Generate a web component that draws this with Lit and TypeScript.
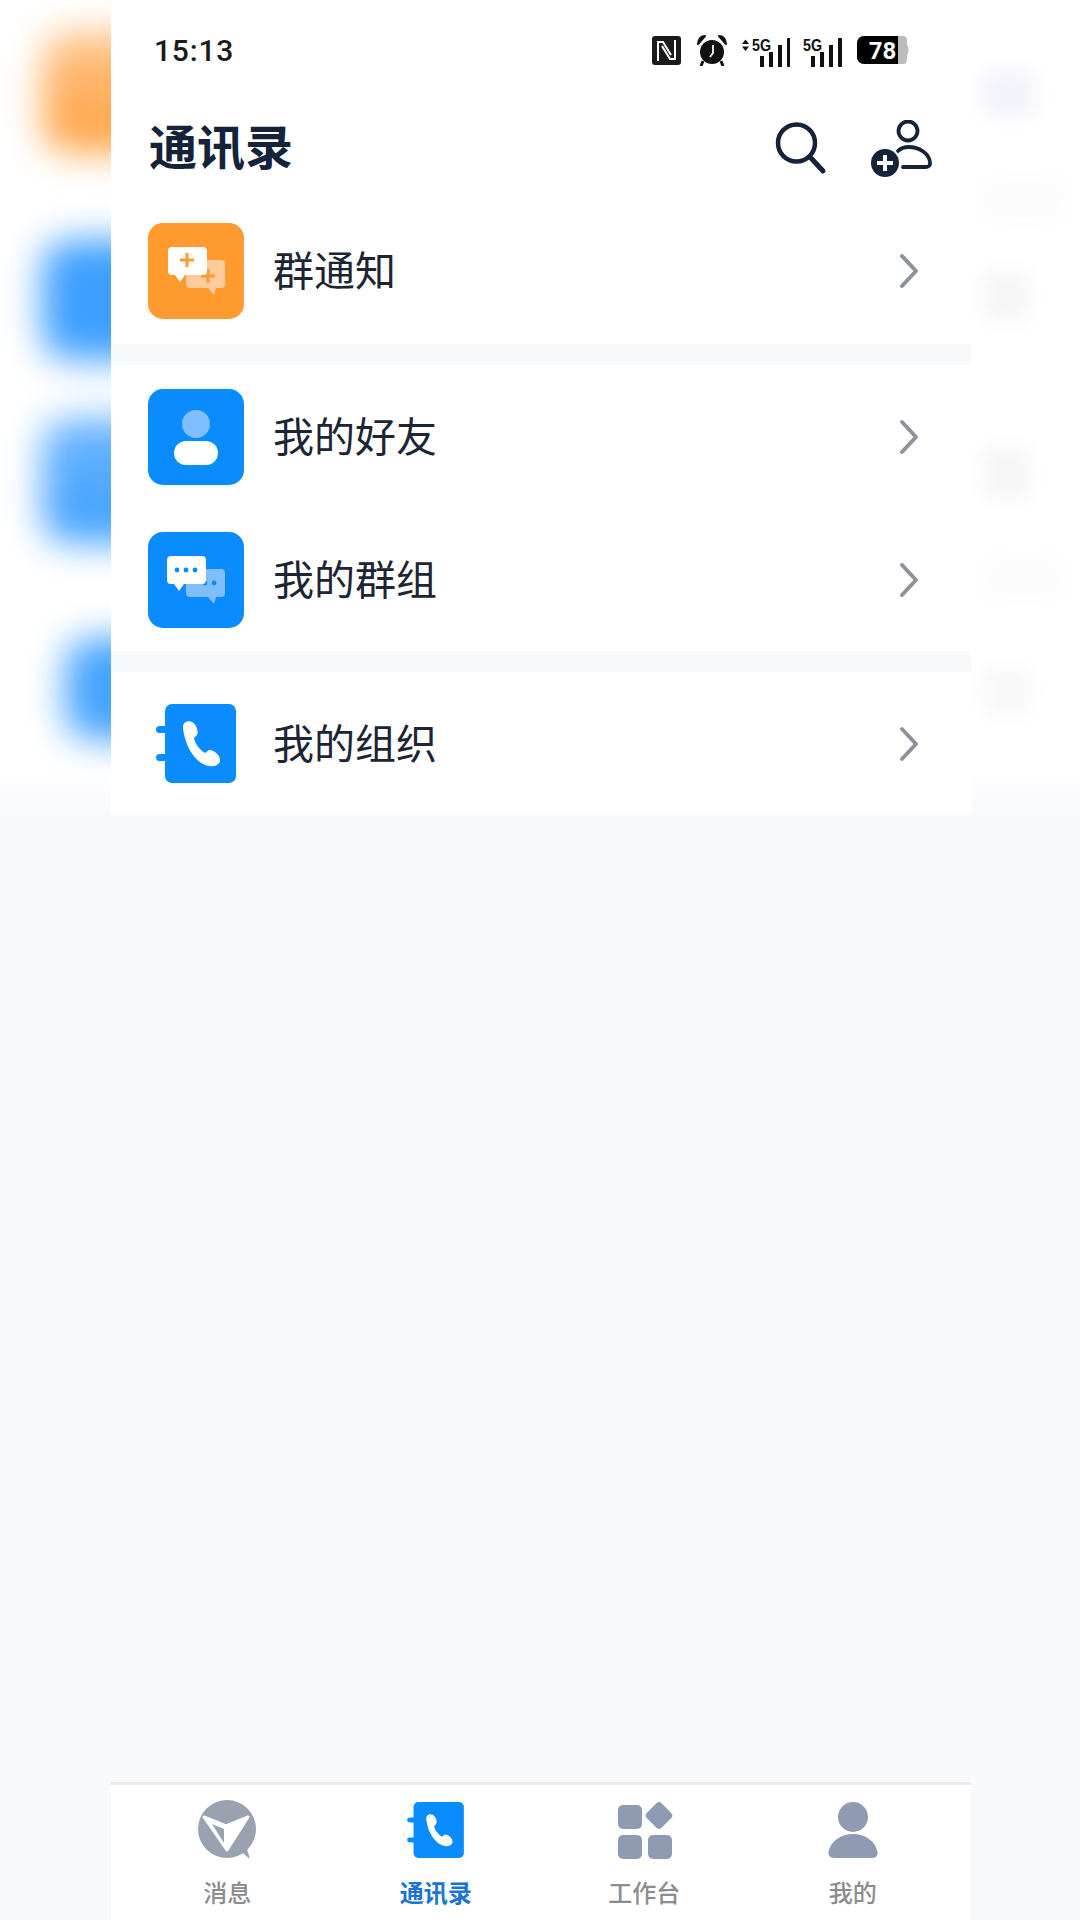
import { LitElement, html, svg, css } from 'lit';
import { customElement } from 'lit/decorators.js';

const INK = '#14233a';
const BLUE = '#0a8cff';

const bookIcon = (w: number, h: number) => html`
  <svg width=${w} height=${h} viewBox="0 0 80 79">
    <rect x="0" y="22" width="14" height="7" rx="3.5" fill=${BLUE}></rect>
    <rect x="0" y="50" width="14" height="7" rx="3.5" fill=${BLUE}></rect>
    <rect x="9" y="0" width="71" height="79" rx="7" fill=${BLUE}></rect>
    <path d="M27 23C27 18 32 16 36 18C40 20 43 27 41 31L38 34C39 40 44 46 49 49L53 46C58 46 64 51 64 56C64 61 58 63 53 62C39 60 28 40 27 23Z" fill="#fff"></path>
  </svg>`;

// tail sits left on the front bubble and right on the back one
const bubble = (x: number, y: number, fill: string, tailRight = false) => svg`
  <path
    d="M${x + 4} ${y}H${x + 35}a4 4 0 0 1 4 4V${y + 24}a4 4 0 0 1 -4 4H${tailRight ? x + 30 : x + 17}l-${tailRight ? 2 : 5} 7l-${tailRight ? 6 : 5} -7H${x + 4}a4 4 0 0 1 -4 -4V${y + 4}a4 4 0 0 1 4 -4Z"
    fill=${fill}></path>`;

const noticeIcon = html`
  <svg width="96" height="96" viewBox="0 0 96 96">
    <rect width="96" height="96" rx="15" fill="#ff9a2e"></rect>
    ${bubble(38, 37, '#ffcb9c', true)}
    <path d="M60 46v14M53 53h14" stroke="#ff9a2e" stroke-width="3"></path>
    ${bubble(20, 24, '#fff')}
    <path d="M39 30v14M32 37h14" stroke="#ff9a2e" stroke-width="3"></path>
  </svg>`;

const friendIcon = html`
  <svg width="96" height="96" viewBox="0 0 96 96">
    <rect width="96" height="96" rx="15" fill=${BLUE}></rect>
    <circle cx="48" cy="35" r="14" fill="#80bfff"></circle>
    <rect x="26" y="52" width="44" height="24" rx="12" fill="#fff"></rect>
  </svg>`;

const groupIcon = html`
  <svg width="96" height="96" viewBox="0 0 96 96">
    <rect width="96" height="96" rx="15" fill=${BLUE}></rect>
    ${bubble(38, 37, '#80bfff', true)}
    <circle cx="57" cy="51" r="2.4" fill=${BLUE}></circle>
    <circle cx="66" cy="51" r="2.4" fill=${BLUE}></circle>
    ${bubble(19, 24, '#fff')}
    <circle cx="29" cy="38" r="2.4" fill=${BLUE}></circle>
    <circle cx="38" cy="38" r="2.4" fill=${BLUE}></circle>
    <circle cx="47" cy="38" r="2.4" fill=${BLUE}></circle>
  </svg>`;

const groups = [
  [{ label: '群通知', icon: noticeIcon }],
  [
    { label: '我的好友', icon: friendIcon },
    { label: '我的群组', icon: groupIcon },
  ],
  [{ label: '我的组织', icon: bookIcon(80, 79) }],
];

const tabIcons = {
  msg: html`
    <svg width="60" height="60" viewBox="0 0 60 60">
      <circle cx="30" cy="29" r="29" fill="#9aa2b1"></circle>
      <path d="M42 50L53 59L47 40Z" fill="#9aa2b1"></path>
      <path d="M7 17L29 26L51 17L30 50Z" fill="#fff" stroke="#fff" stroke-width="3" stroke-linejoin="round"></path>
      <path d="M15 24L27 29V43Z" fill="#9aa2b1"></path>
    </svg>`,
  work: html`
    <svg width="64" height="60" viewBox="0 0 64 60">
      <rect x="6" y="5" width="24" height="24" rx="5" fill="#8f9bb2"></rect>
      <rect x="6" y="35" width="24" height="24" rx="5" fill="#8f9bb2"></rect>
      <rect x="36" y="35" width="24" height="24" rx="5" fill="#8f9bb2"></rect>
      <rect x="36.5" y="5" width="21" height="21" rx="4" fill="#8f9bb2" transform="rotate(45 47 15.5)"></rect>
    </svg>`,
  me: html`
    <svg width="52" height="56" viewBox="0 0 52 56">
      <circle cx="26" cy="15" r="15" fill="#8f9bb2"></circle>
      <path d="M7 56C3 56 1 53 1.500 50C3.500 39 14 32 26 32C38 32 48.500 39 50.500 50C51 53 49 56 45 56Z" fill="#8f9bb2"></path>
    </svg>`,
};

const tabs = [
  { label: '消息', icon: tabIcons.msg, active: false },
  { label: '通讯录', icon: bookIcon(57, 56), active: true },
  { label: '工作台', icon: tabIcons.work, active: false },
  { label: '我的', icon: tabIcons.me, active: false },
];

const bars = (x: number) => svg`
  <rect x=${x} y="18" width="4" height="11" fill="#111"></rect>
  <rect x=${x + 9} y="14" width="4" height="15" fill="#111"></rect>
  <rect x=${x + 18} y="7" width="4" height="22" fill="#111"></rect>
  <rect x=${x + 27} y="0" width="4" height="29" rx="1" fill="#111"></rect>`;

const fiveG = (x: number) => svg`
  <text x=${x} y="12.5" font-size="16" font-weight="700" textLength="19" lengthAdjust="spacingAndGlyphs"
    font-family="Liberation Sans, sans-serif" fill="#111">5G</text>`;

@customElement('app-root')
export class AppRoot extends LitElement {
  static styles = css`
    :host {
      display: block;
      width: 1080px;
      height: 1920px;
      overflow: hidden;
      background: #f8f9fc;
      font-family: "Noto Sans CJK SC", "Liberation Sans", sans-serif;
    }

    .stage {
      display: grid;
      grid-template-columns: 111px 860px 109px;
      height: 1920px;
    }

    .side {
      height: 820px;
      overflow: hidden;
      display: flex;
      flex-direction: column;
      background: linear-gradient(#fff 770px, #f8f9fc 815px);
    }

    .side.left { padding-top: 32px; box-sizing: border-box; }
    .side.right { padding-top: 70px; padding-left: 10px; box-sizing: border-box; }

    .blob {
      flex: none;
      margin-left: 42px;
      width: 140px;
      border-radius: 28px;
      filter: blur(18px);
    }
    .blob.a { height: 120px; background: linear-gradient(#ffc58c, #ff9f3a); }
    .blob.b { height: 120px; margin-top: 88px; background: #3d9fff; }
    .blob.c { height: 125px; margin-top: 58px; background: linear-gradient(#6db6ff, #3d9fff); }
    .blob.d { height: 102px; margin-top: 95px; margin-left: 65px; background: #45a3ff; }

    .ghost {
      flex: none;
      border-radius: 14px;
      filter: blur(9px);
    }
    .ghost.g1 { width: 56px; height: 48px; background: #f3f4fb; }
    .ghost.g2 { width: 86px; height: 46px; margin-top: 58px; background: #fcfcfc; }
    .ghost.g3 { width: 50px; height: 52px; margin-top: 48px; background: #f6f6f6; }
    .ghost.g4 { width: 50px; height: 54px; margin-top: 124px; background: #f6f6f6; }
    .ghost.g5 { width: 86px; height: 44px; margin-top: 56px; background: #fcfcfc; }
    .ghost.g6 { width: 50px; height: 50px; margin-top: 66px; background: #f8f8f8; }

    .panel {
      display: flex;
      flex-direction: column;
      height: 1920px;
      background: #f8f9fb;
    }

    .status {
      height: 100px;
      flex: none;
      background: #fff;
      box-sizing: border-box;
      padding: 0 62px 0 43px;
      display: flex;
      align-items: center;
      justify-content: space-between;
    }

    .time {
      font-family: Roboto, "Liberation Sans", sans-serif;
      font-size: 30px;
      font-weight: 500;
      letter-spacing: 0.8px;
      color: #1a1a1a;
    }

    .status-icons {
      display: flex;
      align-items: center;
    }
    .status-icons svg { display: block; }
    .nfc { margin-right: 16px; }
    .alarm { margin-right: 15px; }
    .sig1 { margin-right: 13px; }
    .sig2 { margin-right: 15px; }

    .titlebar {
      height: 99px;
      flex: none;
      background: #fff;
      box-sizing: border-box;
      padding: 0 36px 0 38px;
      display: flex;
      align-items: center;
    }

    .title {
      flex: 1;
      font-size: 48px;
      font-weight: 700;
      line-height: 60px;
      padding-bottom: 12px;
      color: #14233a;
    }

    .titlebar svg { display: block; }
    .search { margin-right: 40px; }

    .groups {
      display: flex;
      flex-direction: column;
      gap: 21px;
    }

    .group { background: #fff; }
    .group:first-child { padding-bottom: 2px; }

    .row {
      height: 143px;
      box-sizing: border-box;
      padding: 0 52px 0 37px;
      display: flex;
      align-items: center;
      gap: 29px;
    }

    .row-icon {
      width: 96px;
      display: flex;
      justify-content: center;
    }
    .row-icon svg, .chev { display: block; }

    .row-label {
      flex: 1;
      font-size: 41px;
      line-height: 56px;
      padding-bottom: 6px;
      color: #1b2534;
    }

    .spacer { flex: 1; }

    .tabbar {
      height: 138px;
      flex: none;
      box-sizing: border-box;
      background: #fff;
      border-top: 3px solid #e9eaee;
      padding: 15px 14px 0 12px;
      display: grid;
      grid-template-columns: repeat(4, 1fr);
    }

    .tab {
      display: flex;
      flex-direction: column;
      align-items: center;
    }

    .tab-icon {
      height: 60px;
      display: flex;
      align-items: center;
      justify-content: center;
    }
    .tab-icon svg { display: block; }

    .tab-label {
      margin-top: 17px;
      font-size: 24px;
      line-height: 30px;
      font-weight: 500;
      color: #8b8c8e;
    }
    .tab.active .tab-label {
      color: #1a75d2;
      font-weight: 700;
    }
  `;

  private renderStatus() {
    return html`
      <div class="status">
        <span class="time">15:13</span>
        <div class="status-icons">
          <svg class="nfc" width="29" height="29" viewBox="0 0 29 29">
            <rect width="29" height="29" rx="3" fill="#1a1a1a"></rect>
            <path d="M6 25V6H11L19 19M23 4V23H18L10 10" fill="none" stroke="#fff" stroke-width="2"></path>
          </svg>
          <svg class="alarm" width="30" height="31" viewBox="0 0 30 31">
            <path d="M1 9C1 4 4 1 8 1ZM29 9C29 4 26 1 22 1Z" fill="#111" stroke="#111" stroke-width="2" stroke-linejoin="round"></path>
            <circle cx="15" cy="17" r="12" fill="#111"></circle>
            <path d="M6 26L4 31M24 26L26 31" stroke="#111" stroke-width="3"></path>
            <path d="M16 10V18L13 22" fill="none" stroke="#fff" stroke-width="1.800"></path>
          </svg>
          <svg class="sig1" width="48" height="33" viewBox="0 -4 48 33">
            <path d="M0 6L3.500 1.500L7 6ZM0 8.500L3.500 13L7 8.500Z" fill="#111"></path>
            ${fiveG(10)}
            ${bars(18)}
          </svg>
          <svg class="sig2" width="39" height="33" viewBox="0 -4 39 33">
            ${fiveG(0)}
            ${bars(8)}
          </svg>
          <svg width="52" height="28" viewBox="0 0 52 28">
            <path d="M38 0H46C49 0 50 2 50 5V23C50 26 49 28 46 28H38Z" fill="#bcbcbc"></path>
            <path d="M50 9C52 10 52 18 50 19Z" fill="#bcbcbc"></path>
            <path d="M7 0H41V28H7C3 28 0 25 0 21V7C0 3 3 0 7 0Z" fill="#000"></path>
            <text x="25.500" y="22.500" text-anchor="middle" font-size="24" font-weight="700"
              font-family="Roboto, Liberation Sans, sans-serif" fill="#fff">78</text>
          </svg>
        </div>
      </div>`;
  }

  private renderTitle() {
    return html`
      <div class="titlebar">
        <div class="title">通讯录</div>
        <svg class="search" width="60" height="60" viewBox="0 0 60 60">
          <circle cx="26.500" cy="23" r="18.500" fill="none" stroke=${INK} stroke-width="4.500"></circle>
          <path d="M40 37L53 51" stroke=${INK} stroke-width="5" stroke-linecap="round"></path>
        </svg>
        <svg width="65" height="60" viewBox="0 0 65 60">
          <circle cx="38" cy="11" r="9.500" fill="none" stroke=${INK} stroke-width="3.800"></circle>
          <path d="M28 31C31 28 35 27 38.500 27C50 27 59 34 60 42C60.500 45 59 47 56 47H33" fill="none"
            stroke=${INK} stroke-width="3.800" stroke-linecap="round"></path>
          <circle cx="15" cy="43" r="14" fill=${INK}></circle>
          <path d="M15 35V51M7 43H23" stroke="#fff" stroke-width="4"></path>
        </svg>
      </div>`;
  }

  render() {
    return html`
      <div class="stage">
        <div class="side left">
          <div class="blob a"></div>
          <div class="blob b"></div>
          <div class="blob c"></div>
          <div class="blob d"></div>
        </div>
        <div class="panel">
          ${this.renderStatus()}
          ${this.renderTitle()}
          <div class="groups">
            ${groups.map((g) => html`
              <div class="group">
                ${g.map((r) => html`
                  <div class="row">
                    <div class="row-icon">${r.icon}</div>
                    <div class="row-label">${r.label}</div>
                    <svg class="chev" width="20" height="36" viewBox="0 0 20 36">
                      <path d="M3 3L17 18L3 33" fill="none" stroke="#8d939c" stroke-width="4" stroke-linecap="round" stroke-linejoin="round"></path>
                    </svg>
                  </div>`)}
              </div>`)}
          </div>
          <div class="spacer"></div>
          <div class="tabbar">
            ${tabs.map((t) => html`
              <div class="tab ${t.active ? 'active' : ''}">
                <div class="tab-icon">${t.icon}</div>
                <div class="tab-label">${t.label}</div>
              </div>`)}
          </div>
        </div>
        <div class="side right">
          <div class="ghost g1"></div>
          <div class="ghost g2"></div>
          <div class="ghost g3"></div>
          <div class="ghost g4"></div>
          <div class="ghost g5"></div>
          <div class="ghost g6"></div>
        </div>
      </div>
    `;
  }
}
